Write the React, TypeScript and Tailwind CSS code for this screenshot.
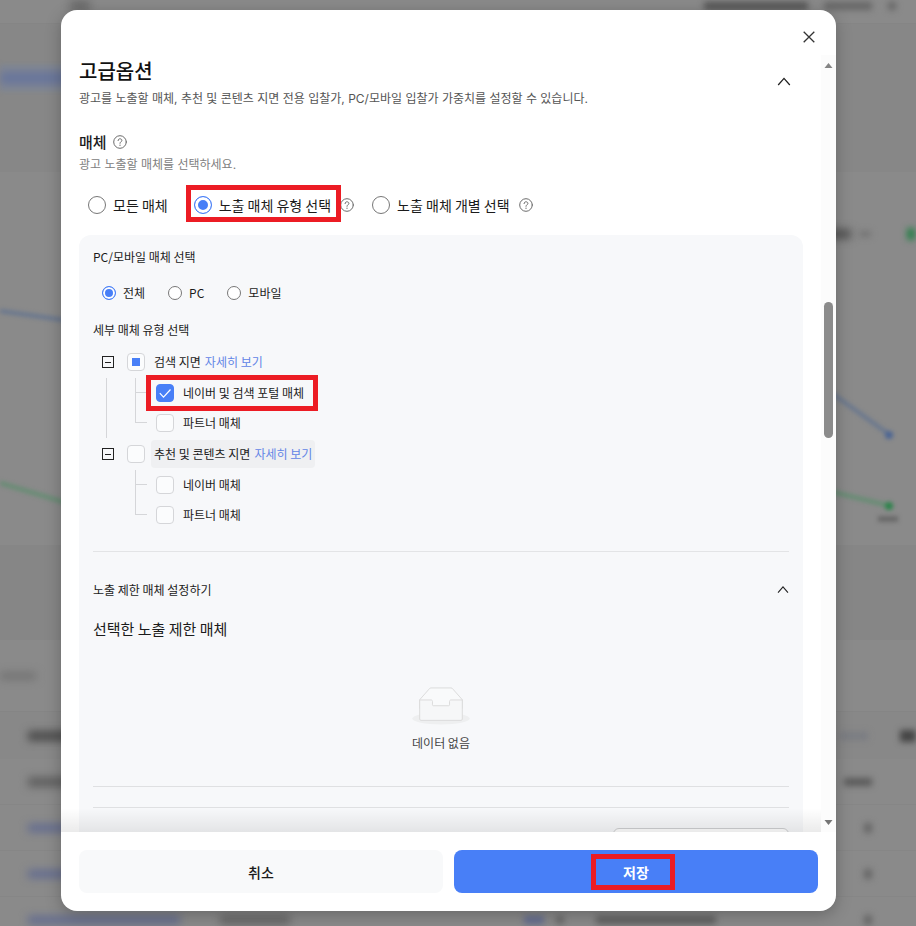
import { useState } from 'react';
import type { ReactNode } from 'react';

const HelpIcon = () => (
  <svg viewBox="0 0 14 14" className="w-3.5 h-3.5 shrink-0" fill="none" stroke="#6b6b6b" strokeLinecap="round">
    <circle cx="7" cy="7" r="6.3" />
    <path d="M5.1 5.6c0-1.1.8-1.8 1.9-1.8s1.9.7 1.9 1.6c0 .8-.5 1.2-1.1 1.6-.5.3-.8.6-.8 1.3" />
    <path d="M7 10.1v.2" strokeWidth="1.2" />
  </svg>
);

const ChevronUp = ({ className }: { className: string }) => (
  <svg viewBox="0 0 14 14" className={className} fill="none" stroke="#222" strokeWidth="1.3">
    <path d="M1.2 10 7 3.4l5.8 6.6" />
  </svg>
);

const EmptyBox = () => (
  <svg viewBox="0 0 64 41" className="w-[60px] h-[38px]">
    <g transform="translate(0 1)" fillRule="evenodd">
      <ellipse fill="#eeeff0" cx="32" cy="33" rx="31" ry="6.5" />
      <g stroke="#d9d9d9">
        <path fill="#f9fafb" d="M55 12.76 44.854 1.258C44.367.474 43.656 0 42.907 0H21.093c-.749 0-1.46.474-1.947 1.257L9 12.761V22h46v-9.24z" />
        <path fill="#f6f7f8" d="M41.2 18.3v-3.6c0-.9.5-1.7 1.4-1.7H55v20.6c0 .8-.6 1.4-1.4 1.4H10.400c-.8 0-1.400-.6-1.400-1.400V13h12.400c.9 0 1.400.8 1.400 1.700v3.600c0 .5.400.9.900.900h16.600c.5 0 .900-.4.900-.900z" />
      </g>
    </g>
  </svg>
);

interface RadioProps {
  name: string;
  label: string;
  checked: boolean;
  onChange: () => void;
  large?: boolean;
  children?: ReactNode;
}

function Radio({ name, label, checked, onChange, large, children }: RadioProps) {
  const size = large
    ? 'w-[18px] h-[18px] checked:shadow-[inset_0_0_0_3px_#fff]'
    : 'w-3.5 h-3.5 checked:shadow-[inset_0_0_0_2px_#fff]';

  return (
    <label className={`relative flex items-center gap-[7px] ${large ? 'pr-2 text-sm' : 'text-xs'} leading-5 whitespace-nowrap`}>
      <input
        type="radio"
        name={name}
        checked={checked}
        onChange={onChange}
        className={`appearance-none shrink-0 rounded-full bg-white border border-[#777] checked:border-[#487ff7] checked:bg-[#487ff7] ${size}`}
      />
      {label}
      {children}
    </label>
  );
}

function WithHelp({ children }: { children: ReactNode }) {
  return (
    <div className="flex items-center gap-px">
      {children}
      <HelpIcon />
    </div>
  );
}

interface CheckboxProps {
  id: string;
  state: 'on' | 'off' | 'partial';
  onChange: () => void;
}

function Checkbox({ id, state, onChange }: CheckboxProps) {
  return (
    <span className="relative w-[18px] h-[18px] shrink-0">
      <input
        id={id}
        type="checkbox"
        checked={state === 'on'}
        onChange={onChange}
        className="block appearance-none w-[18px] h-[18px] rounded bg-[#fbfcfd] border border-[#d5d6d9] checked:bg-[#487ff7] checked:border-[#487ff7]"
      />
      {state === 'on' && (
        <svg viewBox="0 0 18 18" className="absolute inset-0 pointer-events-none" fill="none" stroke="#fff" strokeWidth="1.2">
          <path d="m3.8 9.2 3.7 3.9 7-7.6" />
        </svg>
      )}
      {state === 'partial' && <span className="absolute inset-[5px] bg-[#487ff7] pointer-events-none" />}
    </span>
  );
}

const groups = [
  {
    id: 'search',
    label: '검색 지면',
    children: [
      { id: 'search-portal', label: '네이버 및 검색 포털 매체', marked: true },
      { id: 'search-partner', label: '파트너 매체' },
    ],
  },
  {
    id: 'content',
    label: '추천 및 콘텐츠 지면',
    active: true,
    children: [
      { id: 'content-naver', label: '네이버 매체' },
      { id: 'content-partner', label: '파트너 매체' },
    ],
  },
];

function MediaTree() {
  const [selected, setSelected] = useState<string[]>(['search-portal']);

  const toggle = (ids: string[]) => {
    const all = ids.every((id) => selected.includes(id));
    const rest = selected.filter((id) => !ids.includes(id));
    setSelected(all ? rest : [...rest, ...ids]);
  };

  return (
    <ul className="mt-1.5 pl-[9px] text-xs">
      {groups.map((group, groupIndex) => {
        const ids = group.children.map((c) => c.id);
        const count = ids.filter((id) => selected.includes(id)).length;
        const lastGroup = groupIndex === groups.length - 1;

        return (
          <li key={group.id}>
            <div className="flex items-center h-8">
              <button type="button" aria-label={`${group.label} 접기`} className="flex items-center justify-center w-3 h-3 mr-[13px] border border-[#222]">
                <span className="w-1.5 h-px bg-[#222]" />
              </button>
              <Checkbox
                id={group.id}
                state={count === ids.length ? 'on' : count > 0 ? 'partial' : 'off'}
                onChange={() => toggle(ids)}
              />
              <div className={`flex items-center gap-1 h-7 ml-1.5 px-[3px] rounded ${group.active ? 'bg-[#eff0f2]' : ''}`}>
                <label htmlFor={group.id}>{group.label}</label>
                <a href="#detail" className="text-[#6285e6]">자세히 보기</a>
              </div>
            </div>
            <ul>
              {group.children.map((child, index) => (
                <li key={child.id} className="flex items-center h-[30px]">
                  <div className="w-[33px] h-full pl-1">
                    {!lastGroup && <div className="h-full border-l border-[#d5d6d9]" />}
                  </div>
                  <div className="w-3 h-full mr-[9px]">
                    <div className="h-[15px] border-l border-b border-[#d5d6d9]" />
                    {index < group.children.length - 1 && <div className="h-[15px] border-l border-[#d5d6d9]" />}
                  </div>
                  <div className="relative flex items-center gap-[9px]">
                    <Checkbox
                      id={child.id}
                      state={selected.includes(child.id) ? 'on' : 'off'}
                      onChange={() => toggle([child.id])}
                    />
                    <label htmlFor={child.id}>{child.label}</label>
                    {child.marked && (
                      <span className="absolute -left-2.5 -right-3.5 -inset-y-[9px] border-[5px] border-[#ec1c24] pointer-events-none" />
                    )}
                  </div>
                </li>
              ))}
            </ul>
          </li>
        );
      })}
    </ul>
  );
}

// dimmed dashboard behind the dialog
function Backdrop() {
  return (
    <div aria-hidden="true" className="absolute inset-0 flex flex-col overflow-hidden bg-[#8a8a8a]">
      <div className="flex items-center justify-end gap-4 h-6 shrink-0 pr-5 pb-3 border-b border-[#858585]">
        <div className="w-5 h-3 mr-auto ml-[70px] bg-[#6a6a6a] blur-[5px]" />
        <div className="w-[104px] h-2 bg-[#555] blur-[3px]" />
        <div className="w-12 h-2 bg-[#666] blur-[3px]" />
        <div className="w-2 h-2 bg-[#666] blur-[3px]" />
      </div>
      <div className="h-[148px] shrink-0 pt-10 bg-[#878787]">
        <div className="flex items-center w-40 h-7 bg-[#828791] blur-[2px]">
          <div className="w-full h-3 bg-[#66749c] blur-[4px]" />
        </div>
      </div>
      <div className="flex items-center justify-end gap-2 h-[124px] shrink-0 pr-px">
        <div className="w-7 h-2.5 bg-[#555] blur-[4px]" />
        <div className="w-3 h-1.5 mr-7 bg-[#747474] blur-[3px]" />
        <div className="w-2 h-3 bg-[#2c804b] blur-[3px]" />
      </div>
      <svg viewBox="0 0 916 249" preserveAspectRatio="none" className="w-full h-[249px] shrink-0 blur-[2px]" fill="none" strokeWidth="4">
        <path d="M0 15 120 32M780 60l110 79" stroke="#67768f" />
        <path d="M0 187 120 223M780 183l110 27" stroke="#648d72" />
        <circle cx="889" cy="139" r="4" fill="#4a6494" />
        <circle cx="889" cy="210" r="4" fill="#288348" />
        <path d="M878 223h20" stroke="#6a6a6a" strokeWidth="6" />
      </svg>
      <div className="h-[95px] shrink-0 bg-[#868686]" />
      <div className="flex items-center h-[72px] shrink-0 border-b border-[#858585]">
        <div className="w-9 h-2 bg-[#747474] blur-[4px]" />
      </div>
      <div className="flex items-center justify-between h-[47px] shrink-0 pl-7 bg-[#888]">
        <div className="w-20 h-2.5 bg-[#4c4c4c] blur-[4px]" />
        <div className="w-7 h-2 ml-auto mr-8 bg-[#7a7c82] blur-[3px]" />
        <div className="w-4 h-3 bg-[#454545] blur-[3px]" />
      </div>
      <div className="flex items-center justify-between h-[46px] shrink-0 pl-7 pr-11 border-b border-[#868686]">
        <div className="w-20 h-2.5 bg-[#606060] blur-[4px]" />
        <div className="w-7 h-2 bg-[#5a5a5a] blur-[3px]" />
      </div>
      {[0, 1, 2].map((row) => (
        <div key={row} className="flex items-center h-[46px] shrink-0 pl-7 pr-11 border-b border-[#868686]">
          <div className="w-[152px] h-2 bg-[#626b90] blur-[4px]" />
          <div className="w-[70px] h-2 ml-10 bg-[#636363] blur-[4px]" />
          <div className="w-5 h-2 ml-auto bg-[#626b90] blur-[3px]" />
          <div className="w-2 h-2 ml-3 bg-[#666] blur-[3px]" />
          <div className="w-[120px] h-2 ml-8 mr-[148px] bg-[#606060] blur-[3px]" />
          <div className="w-2 h-2.5 bg-[#666] blur-[3px]" />
        </div>
      ))}
    </div>
  );
}

function ScrollRail() {
  return (
    <div className="flex flex-col items-center w-[15px] shrink-0 pt-[3px] pb-0.5 bg-[#fcfcfc]">
      <svg viewBox="0 0 9 16" className="w-[9px] h-4" fill="#858585">
        <path d="M.5 10 4.5 5l4 5z" />
      </svg>
      <div className="flex-[228]" />
      <div className="flex-[136] w-[9px] rounded-full bg-[#8b8b8b]" />
      <div className="flex-[376]" />
      <svg viewBox="0 0 9 16" className="w-[9px] h-4" fill="#757575">
        <path d="m.5 6 4 5 4-5z" />
      </svg>
    </div>
  );
}

export default function App() {
  const [scope, setScope] = useState('type');
  const [device, setDevice] = useState('all');

  return (
    <div className="relative h-screen pt-2.5 pb-[15px] pl-[61px] pr-20 overflow-hidden font-['Noto_Sans_CJK_KR',sans-serif] text-[#1b1b1b]">
      <Backdrop />
      <div role="dialog" aria-label="고급옵션" className="relative flex flex-col h-full rounded-2xl bg-white overflow-hidden shadow-[0_4px_16px_rgba(0,0,0,0.25)]">
        <div className="flex items-center justify-end h-[45px] shrink-0 pt-[9px] pr-5">
          <button type="button" aria-label="닫기" className="p-px">
            <svg viewBox="0 0 12 12" className="w-3 h-3" stroke="#333" strokeWidth="1.3">
              <path d="m.7.7 10.6 10.6M11.3.7.7 11.3" />
            </svg>
          </button>
        </div>

        <div className="flex flex-1 min-h-0">
          <div className="relative flex-1 min-w-0 px-[18px] overflow-hidden">
            <div className="flex items-center justify-between pr-3">
              <div>
                <h2 className="text-xl leading-8 font-medium text-[#111]">고급옵션</h2>
                <p className="mt-0.5 text-xs leading-5 text-[#555] font-['Inter','Noto_Sans_CJK_KR',sans-serif]">
                  광고를 노출할 매체, 추천 및 콘텐츠 지면 전용 입찰가, PC/모바일 입찰가 가중치를 설정할 수 있습니다.
                </p>
              </div>
              <button type="button" aria-label="고급옵션 접기">
                <ChevronUp className="w-3.5 h-3.5" />
              </button>
            </div>

            <div className="flex items-center gap-1.5 mt-[22px]">
              <h3 className="text-[15px] leading-[22px] font-medium">매체</h3>
              <HelpIcon />
            </div>
            <p className="mt-0.5 text-xs leading-5 text-[#808080] font-['Inter','Noto_Sans_CJK_KR',sans-serif]">광고 노출할 매체를 선택하세요.</p>

            <div className="flex items-center gap-[18px] mt-5 pl-[9px]">
              <Radio large name="scope" label="모든 매체" checked={scope === 'all'} onChange={() => setScope('all')} />
              <WithHelp>
                <Radio large name="scope" label="노출 매체 유형 선택" checked={scope === 'type'} onChange={() => setScope('type')}>
                  <span className="absolute -left-2 -right-0.5 -top-2.5 -bottom-[7px] z-10 border-[5px] border-[#ec1c24] pointer-events-none" />
                </Radio>
              </WithHelp>
              <WithHelp>
                <Radio large name="scope" label="노출 매체 개별 선택" checked={scope === 'each'} onChange={() => setScope('each')} />
              </WithHelp>
            </div>

            <section className="mt-5 px-3.5 pt-3 pb-8 rounded-xl bg-[#f7f8fa]">
              <h4 className="text-xs leading-5">PC/모바일 매체 선택</h4>
              <div className="flex items-center gap-[23px] mt-4 pl-[9px]">
                <Radio name="device" label="전체" checked={device === 'all'} onChange={() => setDevice('all')} />
                <Radio name="device" label="PC" checked={device === 'pc'} onChange={() => setDevice('pc')} />
                <Radio name="device" label="모바일" checked={device === 'mobile'} onChange={() => setDevice('mobile')} />
              </div>

              <h4 className="mt-[17px] text-xs leading-5">세부 매체 유형 선택</h4>
              <MediaTree />

              <hr className="mt-[21px] border-[#e3e4e6]" />

              <div className="flex items-center justify-between mt-7">
                <h4 className="text-xs leading-5">노출 제한 매체 설정하기</h4>
                <button type="button" aria-label="노출 제한 매체 접기">
                  <ChevronUp className="w-3 h-3" />
                </button>
              </div>
              <h3 className="mt-[17px] text-[15px] leading-6">선택한 노출 제한 매체</h3>

              <div className="flex flex-col items-center gap-2 mt-[46px]">
                <EmptyBox />
                <p className="text-xs leading-5 text-[#444]">데이터 없음</p>
              </div>

              <hr className="mt-[33px] border-[#dfe0e2]" />
              <hr className="mt-5 border-[#dfe0e2]" />
              <div className="flex justify-end mt-5">
                <input type="text" aria-label="매체 검색" className="w-44 h-9 px-3 text-xs rounded-md border border-[#cfd0d2] bg-white" />
              </div>
            </section>

            <div className="absolute inset-x-0 bottom-0 h-6 bg-linear-to-b from-transparent to-black/8 pointer-events-none" />
          </div>
          <ScrollRail />
        </div>

        <div className="flex gap-[11px] shrink-0 p-[18px] text-sm leading-5">
          <button type="button" className="flex-1 h-[43px] rounded-lg bg-[#f8f9fa] font-medium">취소</button>
          <button type="button" className="flex-1 h-[43px] rounded-lg bg-[#487ff7] font-bold text-white">
            <span className="relative">
              저장
              <span className="absolute -left-8 -right-[26px] -inset-y-2 border-[5px] border-[#ec1c24]" />
            </span>
          </button>
        </div>
      </div>
    </div>
  );
}
